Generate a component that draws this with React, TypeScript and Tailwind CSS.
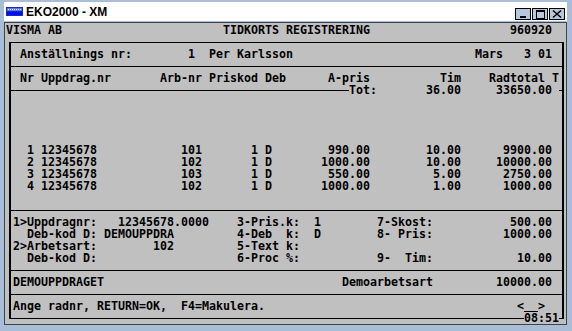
import React from 'react';

type Edge = { up?: boolean; down?: boolean; left?: boolean; right?: boolean };

const COLS = 80;

// place text at absolute columns of an 80 column terminal line
function put(parts: [number, string][]) {
  const row = Array(COLS).fill(' ');
  parts.forEach(([col, text]) => {
    [...text].forEach((ch, i) => {
      row[col + i] = ch;
    });
  });
  return row.join('');
}

// right aligned, ending at column `end`
const ra = (end: number, text: string): [number, string] => [end - [...text].length + 1, text];

const V: Edge = { up: true, down: true };
const TEE_L: Edge = { up: true, down: true, right: true };
const TEE_R: Edge = { up: true, down: true, left: true };

function BoxCell({ up, down, left, right }: Edge) {
  const on = up || down || left || right;
  return (
    <div className="flex h-3 w-[7px] shrink-0 flex-col">
      <div className="flex h-[6px]">
        <div className="w-[3px]" />
        <div className={up ? 'w-[2px] bg-black' : 'w-[2px]'} />
      </div>
      <div className="flex h-px">
        <div className={left ? 'w-[3px] bg-black' : 'w-[3px]'} />
        <div className={on ? 'w-[2px] bg-black' : 'w-[2px]'} />
        <div className={right ? 'flex-1 bg-black' : 'flex-1'} />
      </div>
      <div className="flex h-[5px]">
        <div className="w-[3px]" />
        <div className={down ? 'w-[2px] bg-black' : 'w-[2px]'} />
      </div>
    </div>
  );
}

function Rule() {
  return (
    <div className="flex h-3 flex-1 flex-col">
      <div className="h-[6px]" />
      <div className="h-px bg-black" />
    </div>
  );
}

function TermRow({ l = V, r = V, children }: { l?: Edge; r?: Edge; children?: React.ReactNode }) {
  return (
    <div className="flex h-3">
      <BoxCell {...l} />
      <div className="flex w-[546px]">{children}</div>
      <BoxCell {...r} />
    </div>
  );
}

function TextRow({ parts }: { parts: [number, string][] }) {
  return (
    <TermRow>
      <span className="whitespace-pre">{put(parts).slice(1, 79)}</span>
    </TermRow>
  );
}

const jobs = [
  { nr: '1', arb: '101', pris: '990.00', tim: '10.00', tot: '9900.00' },
  { nr: '2', arb: '102', pris: '1000.00', tim: '10.00', tot: '10000.00' },
  { nr: '3', arb: '103', pris: '550.00', tim: '5.00', tot: '2750.00' },
  { nr: '4', arb: '102', pris: '1000.00', tim: '1.00', tot: '1000.00' },
];

function Terminal() {
  return (
    <div className="flex-1 border border-[#3c4450] bg-[#c0c0c0] pl-px pt-px font-['DejaVu_Sans_Mono',monospace] text-[11.63px] leading-3 font-bold text-black">
      <div className="h-3 whitespace-pre">
        {put([
          [0, 'VISMA AB'],
          [31, 'TIDKORTS REGISTRERING'],
          [72, '960920'],
        ])}
      </div>

      <TermRow l={{ down: true, right: true }} r={{ down: true, left: true }}>
        <Rule />
      </TermRow>
      <TextRow
        parts={[
          [2, 'Anställnings nr:'],
          [26, '1'],
          [29, 'Per Karlsson'],
          [67, 'Mars   3 01'],
        ]}
      />
      <TermRow l={TEE_L} r={TEE_R}>
        <Rule />
      </TermRow>
      <TextRow
        parts={[
          [2, 'Nr Uppdrag.nr'],
          [22, 'Arb-nr'],
          [29, 'Priskod'],
          [37, 'Deb'],
          [46, 'A-pris'],
          [62, 'Tim'],
          [69, 'Radtotal'],
          [78, 'T'],
        ]}
      />
      <TermRow l={TEE_L} r={TEE_R}>
        <Rule />
        <span className="whitespace-pre">
          {put([
            [49, 'Tot:'],
            ra(64, '36.00'),
            ra(77, '33650.00'),
          ]).slice(49, 79)}
        </span>
      </TermRow>

      {[0, 1, 2, 3].map((i) => (
        <TextRow key={`a${i}`} parts={[]} />
      ))}
      {jobs.map((j) => (
        <TextRow
          key={j.nr}
          parts={[
            [3, j.nr],
            [5, '12345678'],
            ra(27, j.arb),
            ra(35, '1'),
            [37, 'D'],
            ra(51, j.pris),
            ra(64, j.tim),
            ra(77, j.tot),
          ]}
        />
      ))}
      <TextRow parts={[]} />

      <TermRow l={TEE_L} r={TEE_R}>
        <Rule />
      </TermRow>
      <TextRow
        parts={[
          [1, '1>Uppdragnr:'],
          [16, '12345678.0000'],
          [33, '3-Pris.k:'],
          [44, '1'],
          [53, '7-Skost:'],
          ra(77, '500.00'),
        ]}
      />
      <TextRow
        parts={[
          [3, 'Deb-kod D:'],
          [14, 'DEMOUPPDRA'],
          [33, '4-Deb  k:'],
          [44, 'D'],
          [53, '8- Pris:'],
          ra(77, '1000.00'),
        ]}
      />
      <TextRow
        parts={[
          [1, '2>Arbetsart:'],
          ra(23, '102'),
          [33, '5-Text k:'],
        ]}
      />
      <TextRow
        parts={[
          [3, 'Deb-kod D:'],
          [33, '6-Proc %:'],
          [53, '9-  Tim:'],
          ra(77, '10.00'),
        ]}
      />
      <TermRow l={TEE_L} r={TEE_R}>
        <Rule />
      </TermRow>
      <TextRow
        parts={[
          [1, 'DEMOUPPDRAGET'],
          [48, 'Demoarbetsart'],
          ra(77, '10000.00'),
        ]}
      />
      <TermRow l={TEE_L} r={TEE_R}>
        <Rule />
      </TermRow>
      <TermRow>
        <span className="whitespace-pre">{put([[1, 'Ange radnr, RETURN=OK,  F4=Makulera.']]).slice(1, 73)}</span>
        <span>&lt;</span>
        <span className="h-[12px] w-[14px] border-b border-black" />
        <span>&gt;</span>
      </TermRow>
      <TermRow l={{ up: true, right: true }} r={{ up: true, left: true }}>
        <Rule />
        <span className="whitespace-pre">08:51</span>
      </TermRow>
    </div>
  );
}

function AppIcon() {
  return (
    <svg width="17" height="9" viewBox="0 0 17 9" className="shrink-0">
      <rect x="0" y="0" width="17" height="9" fill="#1428c8" />
      <rect x="1" y="1" width="15" height="3" fill="#5a78f0" />
      {[2, 4, 6, 8, 10, 12, 14].map((x) => (
        <rect key={x} x={x} y={2} width="1" height="1" fill="#e8ecff" />
      ))}
      <rect x="1" y="5" width="15" height="3" fill="#0010f0" />
    </svg>
  );
}

function TitleButton({ children }: { children: React.ReactNode }) {
  return (
    <div className="flex h-[12px] w-[16px] items-center justify-center border border-black bg-[#b8c8dc]">
      {children}
    </div>
  );
}

export default function App() {
  return (
    <div className="flex h-[331px] w-[572px] flex-col bg-[#a9bdd6] pb-[6px] pl-[4px] pr-[5px] pt-[2px]">
      <div className="flex h-[19px] items-center bg-white pl-[2px] pr-[2px]">
        <AppIcon />
        <span className="ml-[3px] font-['Liberation_Sans',Arial,sans-serif] text-[12px] font-bold text-black">
          EKO2000 - XM
        </span>
        <div className="mb-[1px] ml-auto flex gap-[1px] self-end">
          <TitleButton>
            <svg width="14" height="10" viewBox="0 0 14 10">
              <rect x="4" y="7" width="6" height="2" fill="#000" />
            </svg>
          </TitleButton>
          <TitleButton>
            <svg width="14" height="10" viewBox="0 0 14 10">
              <rect x="3" y="1" width="8" height="8" fill="none" stroke="#000" strokeWidth="1" transform="translate(0.5 0.5)" />
              <rect x="3" y="1" width="9" height="2" fill="#000" />
            </svg>
          </TitleButton>
          <TitleButton>
            <svg width="14" height="10" viewBox="0 0 14 10">
              <path d="M3 1.5 L11 8.5 M11 1.5 L3 8.5" stroke="#000" strokeWidth="1.6" />
            </svg>
          </TitleButton>
        </div>
      </div>
      <div className="h-px" />
      <Terminal />
    </div>
  );
}
